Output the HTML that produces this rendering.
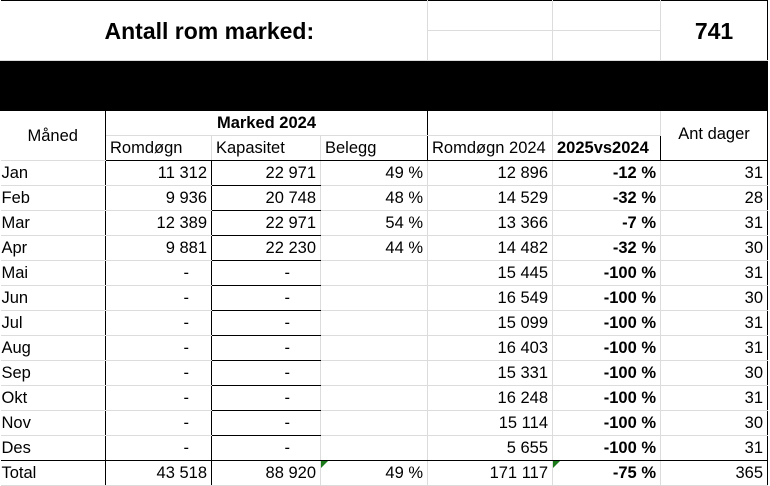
<!DOCTYPE html>
<html><head><meta charset="utf-8"><style>
body{margin:0;width:770px;height:483px;overflow:hidden;background:#fff;font-family:"Liberation Sans",Arial,sans-serif;color:#000}
table{border-collapse:collapse;table-layout:fixed;position:absolute;left:0;top:0}
td{border:1px solid #dcdcdc;padding:0 4px;font-size:16.5px;white-space:nowrap;overflow:hidden;height:24px;line-height:24px}
.r{text-align:right}.c{text-align:center}.b{font-weight:bold}
.bl{border-left:1px solid #000}.br{border-right:1px solid #000}.bb{border-bottom:1px solid #000}.bt{border-top:1px solid #000}
.d{padding-right:22px}.k{padding-right:30px}
.tri{position:relative}
.tri:before{content:"";position:absolute;left:0;top:0;border-top:7px solid #1a7a1a;border-right:7px solid transparent}
</style></head><body>
<table>
<colgroup><col style="width:105px"><col style="width:106px"><col style="width:109px"><col style="width:107px"><col style="width:125px"><col style="width:108px"><col style="width:107px"></colgroup>
<tr><td colspan="4" rowspan="2" class="b bt" style="font-size:23px;height:58px;border-left:none;padding-left:104px">Antall rom marked:</td><td class="bt" style="height:29px"></td><td class="bt"></td><td rowspan="2" class="c b bt br" style="font-size:23px">741</td></tr>
<tr><td style="height:29px"></td><td></td></tr>
<tr><td colspan="7" style="background:#000;height:49px;border-color:#000"></td></tr>
<tr><td rowspan="2" class="c br" style="border-left:none">Måned</td><td colspan="3" class="c b" style="border-right:1px solid #000">Marked 2024</td><td style="border-bottom:none"></td><td class="bl" style="border-bottom:none"></td><td rowspan="2" class="c bl br bb" style="vertical-align:top;line-height:46px">Ant dager</td></tr>
<tr><td class="bb">Romdøgn</td><td class="bb">Kapasitet</td><td class="bb br">Belegg</td><td class="bb">Romdøgn 2024</td><td class="bb bl b">2025vs2024</td></tr>
<tr><td class="br" style="border-left:none;padding-left:1px">Jan</td><td class="r br">11 312</td><td class="r bb">22 971</td><td class="r">49 %</td><td class="r">12 896</td><td class="r b">-12 %</td><td class="r bl br">31</td></tr>
<tr><td class="br" style="border-left:none;padding-left:1px">Feb</td><td class="r br">9 936</td><td class="r bb">20 748</td><td class="r">48 %</td><td class="r">14 529</td><td class="r b">-32 %</td><td class="r bl br">28</td></tr>
<tr><td class="br" style="border-left:none;padding-left:1px">Mar</td><td class="r br">12 389</td><td class="r bb">22 971</td><td class="r">54 %</td><td class="r">13 366</td><td class="r b">-7 %</td><td class="r bl br">31</td></tr>
<tr><td class="br" style="border-left:none;padding-left:1px">Apr</td><td class="r br">9 881</td><td class="r bb">22 230</td><td class="r">44 %</td><td class="r">14 482</td><td class="r b">-32 %</td><td class="r bl br">30</td></tr>
<tr><td class="br" style="border-left:none;padding-left:1px">Mai</td><td class="r br d">-</td><td class="r bb k">-</td><td></td><td class="r">15 445</td><td class="r b">-100 %</td><td class="r bl br">31</td></tr>
<tr><td class="br" style="border-left:none;padding-left:1px">Jun</td><td class="r br d">-</td><td class="r bb k">-</td><td></td><td class="r">16 549</td><td class="r b">-100 %</td><td class="r bl br">30</td></tr>
<tr><td class="br" style="border-left:none;padding-left:1px">Jul</td><td class="r br d">-</td><td class="r bb k">-</td><td></td><td class="r">15 099</td><td class="r b">-100 %</td><td class="r bl br">31</td></tr>
<tr><td class="br" style="border-left:none;padding-left:1px">Aug</td><td class="r br d">-</td><td class="r bb k">-</td><td></td><td class="r">16 403</td><td class="r b">-100 %</td><td class="r bl br">31</td></tr>
<tr><td class="br" style="border-left:none;padding-left:1px">Sep</td><td class="r br d">-</td><td class="r bb k">-</td><td></td><td class="r">15 331</td><td class="r b">-100 %</td><td class="r bl br">30</td></tr>
<tr><td class="br" style="border-left:none;padding-left:1px">Okt</td><td class="r br d">-</td><td class="r bb k">-</td><td></td><td class="r">16 248</td><td class="r b">-100 %</td><td class="r bl br">31</td></tr>
<tr><td class="br" style="border-left:none;padding-left:1px">Nov</td><td class="r br d">-</td><td class="r bb k">-</td><td></td><td class="r">15 114</td><td class="r b">-100 %</td><td class="r bl br">30</td></tr>
<tr><td class="br bb" style="border-left:none;padding-left:1px">Des</td><td class="r br bb d">-</td><td class="r bb k">-</td><td class="bb"></td><td class="r bb">5 655</td><td class="r b bb">-100 %</td><td class="r bl br bb">31</td></tr>
<tr><td class="br" style="border-left:none;padding-left:1px;height:22px;line-height:22px">Total</td><td class="r br">43 518</td><td class="r">88 920</td><td class="r tri">49 %</td><td class="r">171 117</td><td class="r b tri">-75 %</td><td class="r bl br">365</td></tr>
</table>
</body></html>
